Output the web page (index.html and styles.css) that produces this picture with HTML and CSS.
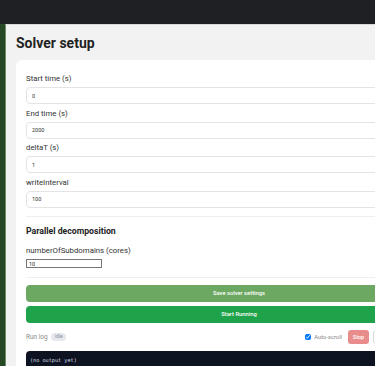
FILE: index.html
```html
<!DOCTYPE html>
<html lang="en">
<head>
    <meta charset="UTF-8">
    <meta name="viewport" content="width=device-width, initial-scale=1.0">
    <title>Solver setup</title>
    <link rel="stylesheet" href="styles.css">
</head>
<body>
    <div class="topbar"></div>
    <div class="layout">
        <div class="sidebar"></div>
        <div class="main">
            <h1 class="page-title">Solver setup</h1>

            <div class="card">
                <div class="field">
                    <label>Start time (s)</label>
                    <input type="text" class="text-input" value="0">
                </div>
                <div class="field">
                    <label>End time (s)</label>
                    <input type="text" class="text-input" value="2000">
                </div>
                <div class="field">
                    <label>deltaT (s)</label>
                    <input type="text" class="text-input" value="1">
                </div>
                <div class="field">
                    <label>writeInterval</label>
                    <input type="text" class="text-input" value="100">
                </div>

                <hr class="divider">

                <h3 class="section-title">Parallel decomposition</h3>
                <div class="field">
                    <label>numberOfSubdomains (cores)</label>
                    <input type="text" class="small-input" value="10">
                </div>

                <hr class="divider">

                <button class="btn btn-save">Save solver settings</button>
                <button class="btn btn-run">Start Running</button>

                <div class="log-head">
                    <div class="log-title">Run log <span class="badge">idle</span></div>
                    <div class="log-tools">
                        <label class="autoscroll"><input type="checkbox" checked> Auto-scroll</label>
                        <button class="btn-small btn-stop" disabled>Stop</button>
                        <button class="btn-small btn-clear">Clear log</button>
                    </div>
                </div>
                <pre class="log-box">(no output yet)</pre>
            </div>
        </div>
    </div>
</body>
</html>
```

FILE: styles.css
```css
html {
    overflow: hidden;
    background: #f2f2f2;
}
body {
    margin: 0;
    padding: 0;
    background: #f2f2f2;
    font-family: Roboto, "Open Sans", Arial, sans-serif;
}
.topbar {
    height: 24px;
    background: #1f2023;
}
.layout {
    display: flex;
    height: 342px;
}
.sidebar {
    width: 5px;
    flex-shrink: 0;
    background: #264723;
}
.main {
    flex: 1;
    min-width: 0;
    overflow: hidden;
    border-left: 1px solid #6d8a66;
    border-top: 1px solid #d8d8d8;
    padding: 0 0 0 10px;
}
.page-title {
    font-size: 14px;
    font-weight: 700;
    color: #222;
    margin: 8px 0 0 0;
    line-height: 20px;
}
.card {
    width: 426px;
    margin-top: 7px;
    padding: 13px 10px 0 10px;
    background: #ffffff;
    border-radius: 6px 6px 0 0;
}
.field {
    margin-bottom: 3.5px;
}
.field label {
    display: block;
    font-size: 7.8px;
    line-height: 11px;
    color: #333;
    margin-bottom: 3px;
}
.text-input {
    display: block;
    box-sizing: border-box;
    width: 100%;
    height: 17px;
    padding: 0 5px;
    border: 1px solid #e4e4e4;
    border-radius: 4px;
    font-family: inherit;
    font-size: 5.5px;
    color: #333;
    background: #fff;
}
.divider {
    border: none;
    border-top: 1px solid #efefef;
    margin: 8.5px 0 7px 0;
}
.section-title {
    font-size: 8.7px;
    font-weight: 700;
    color: #222;
    margin: 0 0 7px 0;
    line-height: 14px;
}
.field .small-input {
    display: block;
    box-sizing: border-box;
    width: 76px;
    height: 9px;
    padding: 0 2px;
    border: 1px solid #767676;
    font-family: inherit;
    font-size: 5.5px;
    color: #222;
}
.btn {
    display: block;
    width: 100%;
    height: 17px;
    border: none;
    border-radius: 4px;
    color: #fff;
    font-family: inherit;
    font-size: 5.8px;
    font-weight: 500;
    margin-bottom: 4px;
}
.btn-save {
    background: #6ca862;
}
.btn-run {
    background: #1fa34a;
}
.log-head {
    display: flex;
    justify-content: space-between;
    align-items: center;
    margin-top: 6.5px;
    height: 16px;
}
.log-title {
    font-size: 6.5px;
    color: #8a8a8a;
}
.badge {
    display: inline-block;
    font-size: 4.8px;
    line-height: 8px;
    padding: 0 3.5px;
    margin-left: 2px;
    border-radius: 5px;
    background: #e7e8ee;
    color: #8a8a99;
    vertical-align: 1px;
}
.log-tools {
    display: flex;
    align-items: center;
    gap: 4px;
}
.autoscroll {
    display: flex;
    align-items: center;
    gap: 3px;
    font-size: 5.8px;
    color: #888;
    margin-right: 2px;
}
.autoscroll input {
    width: 6px;
    height: 6px;
    margin: 0;
}
.btn-small {
    height: 14px;
    border-radius: 3px;
    font-family: inherit;
    font-size: 5.5px;
    font-weight: 500;
}
.btn-stop {
    width: 21px;
    padding: 0;
    border: none;
    background: #e98c8c;
    color: #fff;
}
.btn-clear {
    width: 79px;
    border: 1px solid #d8d8d8;
    background: #fff;
    color: #555;
}
.log-box {
    margin: 6px 0 0 0;
    height: 40px;
    padding: 6px 4px;
    background: #0e1322;
    border-radius: 4px;
    color: #d8dbe4;
    font-family: "DejaVu Sans Mono", "Liberation Mono", monospace;
    font-size: 5.2px;
}
```
